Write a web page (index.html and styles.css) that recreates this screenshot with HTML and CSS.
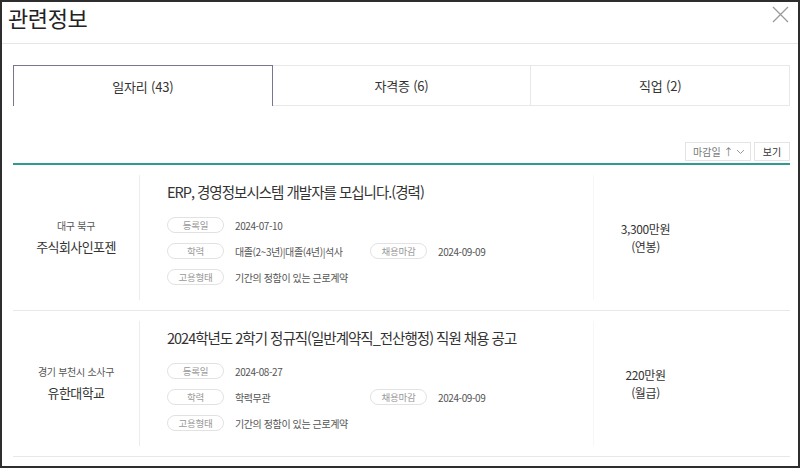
FILE: index.html
```html
<!DOCTYPE html>
<html lang="ko">
<head>
<meta charset="utf-8">
<title>관련정보</title>
<link rel="stylesheet" href="styles.css">
</head>
<body>
<div class="frame">
  <header class="head">
    <h1 class="title">관련정보</h1>
    <button class="close" aria-label="닫기">
      <svg width="17" height="17" viewBox="0 0 17 17"><path d="M1 1L16 16M16 1L1 16" stroke="#9a9a9a" stroke-width="1.3" fill="none"/></svg>
    </button>
  </header>
  <main class="content">
    <nav class="tabs">
      <a class="tab active">일자리 (43)</a>
      <a class="tab">자격증 (6)</a>
      <a class="tab">직업 (2)</a>
    </nav>
    <div class="toolbar">
      <div class="sort">
        <span>마감일 ↑</span>
        <svg width="9" height="6" viewBox="0 0 9 6"><path d="M1 1L4.5 4.5L8 1" stroke="#999" stroke-width="1" fill="none"/></svg>
      </div>
      <button class="view">보기</button>
    </div>
    <ul class="list">
      <li class="job">
        <div class="company">
          <p class="loc">대구 북구</p>
          <p class="name">주식회사인포젠</p>
        </div>
        <div class="info">
          <h2 class="job-title">ERP, 경영정보시스템 개발자를 모십니다.(경력)</h2>
          <div class="meta-row"><span class="badge">등록일</span><span class="value">2024-07-10</span></div>
          <div class="meta-row"><span class="badge">학력</span><span class="value">대졸(2~3년)|대졸(4년)|석사</span><span class="badge">채용마감</span><span class="value">2024-09-09</span></div>
          <div class="meta-row"><span class="badge">고용형태</span><span class="value wide">기간의 정함이 있는 근로계약</span></div>
        </div>
        <div class="pay"><p>3,300만원</p><p>(연봉)</p></div>
      </li>
      <li class="job">
        <div class="company">
          <p class="loc">경기 부천시 소사구</p>
          <p class="name">유한대학교</p>
        </div>
        <div class="info">
          <h2 class="job-title">2024학년도 2학기 정규직(일반계약직_전산행정) 직원 채용 공고</h2>
          <div class="meta-row"><span class="badge">등록일</span><span class="value">2024-08-27</span></div>
          <div class="meta-row"><span class="badge">학력</span><span class="value">학력무관</span><span class="badge">채용마감</span><span class="value">2024-09-09</span></div>
          <div class="meta-row"><span class="badge">고용형태</span><span class="value wide">기간의 정함이 있는 근로계약</span></div>
        </div>
        <div class="pay"><p>220만원</p><p>(월급)</p></div>
      </li>
    </ul>
  </main>
</div>
</body>
</html>
```
FILE: styles.css
```css
* { box-sizing: border-box; }
html, body { margin: 0; padding: 0; background: #fff; }
body {
  font-family: "Noto Sans CJK KR", "Noto Sans", sans-serif;
  color: #333;
}
p, h1, h2, ul { margin: 0; padding: 0; }
ul { list-style: none; }

.frame {
  width: 800px;
  height: 468px;
  border: 2px solid #2e2e2e;
  overflow: hidden;
  background: #fff;
}

.head {
  height: 42px;
  border-bottom: 1px solid #e6e6e6;
  display: flex;
  justify-content: space-between;
  align-items: flex-start;
  padding: 1px 9px 0 6px;
}
.title {
  font-size: 22px;
  font-weight: 400;
  line-height: 28px;
  color: #222;
  letter-spacing: -0.4px;
}
.close {
  border: 0;
  background: none;
  padding: 0;
  margin-top: 3px;
  width: 17px;
  height: 17px;
  display: block;
}
.close svg { display: block; }

.content { padding: 21px 8px 0 11px; }

.tabs { display: flex; height: 41px; }
.tab {
  flex: 1;
  display: flex;
  align-items: center;
  justify-content: center;
  font-size: 13px;
  color: #333;
  border: 1px solid #e8e8e8;
  border-left: 0;
  letter-spacing: -0.2px;
}
.tab.active {
  border: 1px solid #77768f;
  border-bottom: 0;
}

.toolbar {
  display: flex;
  justify-content: flex-end;
  gap: 3px;
  margin-top: 36px;
  margin-bottom: 2px;
  height: 19px;
}
.sort {
  width: 66px;
  height: 19px;
  border: 1px solid #e4e4e4;
  display: flex;
  align-items: center;
  justify-content: space-between;
  padding: 0 5px 0 7px;
  font-size: 10px;
  color: #777;
}
.sort svg { display: block; }
.view {
  width: 36px;
  height: 19px;
  border: 1px solid #e4e4e4;
  background: #fff;
  font-family: inherit;
  font-size: 10px;
  color: #333;
  padding: 0;
}

.list { border-top: 2px solid #2f9a92; }
.job {
  display: flex;
  padding: 10px 0;
  border-bottom: 1px solid #e8e8e8;
}
.company {
  width: 127px;
  min-height: 125px;
  border-right: 1px solid #ececec;
  display: flex;
  flex-direction: column;
  align-items: center;
  justify-content: center;
  gap: 3px;
}
.loc { font-size: 10px; color: #555; line-height: 16px; letter-spacing: -0.3px; }
.name { font-size: 13px; color: #333; line-height: 20px; letter-spacing: -0.6px; }

.info { flex: 1; padding: 7px 0 0 27px; }
.job-title {
  font-size: 14.5px;
  font-weight: 400;
  line-height: 20px;
  color: #333;
  padding-bottom: 5px;
  letter-spacing: -1px;
}
.meta-row {
  display: flex;
  align-items: center;
  height: 16px;
  margin-top: 10px;
}
.badge {
  width: 57px;
  height: 16px;
  border: 1px solid #e2e2e2;
  border-radius: 8px;
  font-size: 9.5px;
  line-height: 14px;
  color: #999;
  text-align: center;
  flex: none;
  letter-spacing: -0.3px;
}
.value {
  margin-left: 11px;
  width: 124px;
  font-size: 10px;
  color: #555;
  white-space: nowrap;
  letter-spacing: -0.4px;
  flex: none;
}
.value + .badge { margin-left: 11px; }
.value.wide { width: auto; }

.pay {
  width: 104px;
  margin-right: 93px;
  border-left: 1px solid #f7f7f7;
  display: flex;
  flex-direction: column;
  align-items: center;
  justify-content: center;
  font-size: 12px;
  line-height: 18px;
  color: #333;
  letter-spacing: -0.4px;
}
```
